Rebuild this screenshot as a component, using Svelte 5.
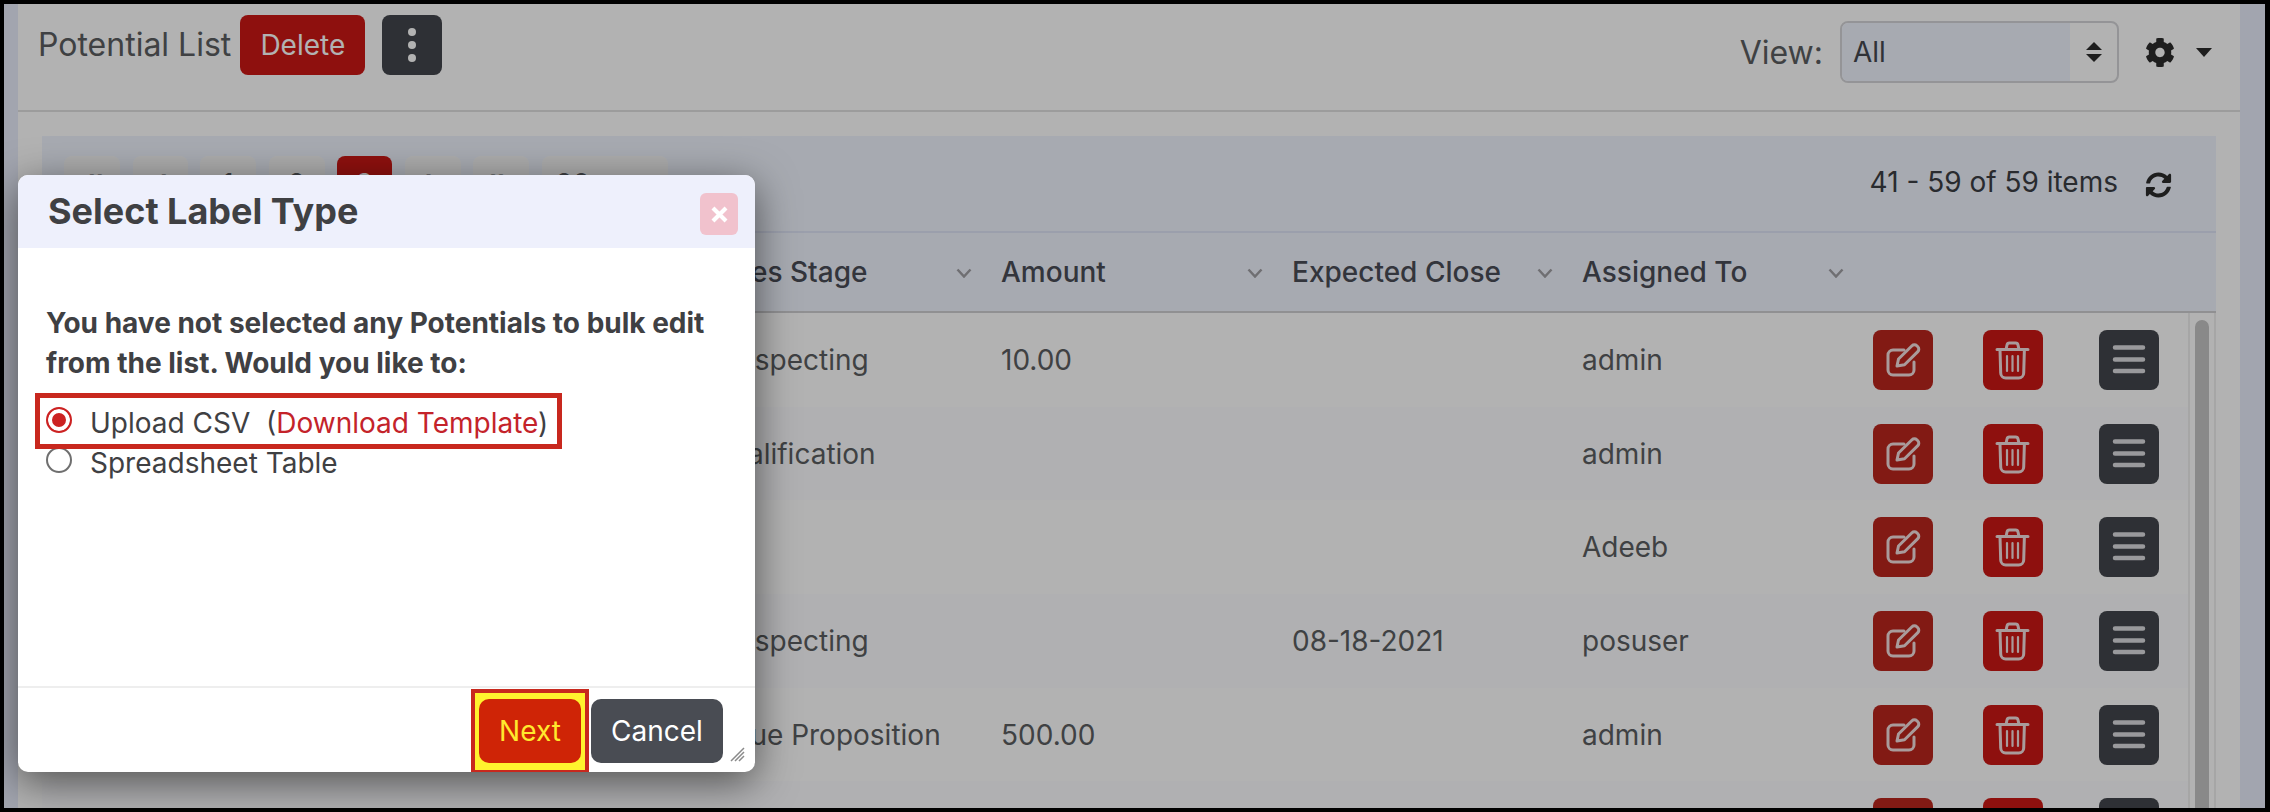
<script lang="ts">
  const pages = [
    { label: '«', w: 56, arrow: true },
    { label: '‹', w: 55, arrow: true },
    { label: '1', w: 56 },
    { label: '2', w: 56 },
    { label: '3', w: 55, active: true },
    { label: '›', w: 56, arrow: true },
    { label: '»', w: 56, arrow: true },
    { label: '20', w: 126, size: true },
  ];
  const cols = ['Sales Stage', 'Amount', 'Expected Close', 'Assigned To'];
  const rows = [
    { stage: 'Prospecting', amount: '10.00', close: '', owner: 'admin' },
    { stage: 'Qualification', amount: '', close: '', owner: 'admin' },
    { stage: '', amount: '', close: '', owner: 'Adeeb' },
    { stage: 'Prospecting', amount: '', close: '08-18-2021', owner: 'posuser' },
    { stage: 'Value Proposition', amount: '500.00', close: '', owner: 'admin' },
    { stage: '', amount: '', close: '', owner: '' },
  ];
</script>

<div class="frame">
  <div class="page">
    <header class="topbar">
      <span class="title">Potential List</span>
      <button class="btn red">Delete</button>
      <button class="btn dark dots" aria-label="More">
        <i></i><i></i><i></i>
      </button>
      <span class="view-label">View:</span>
      <div class="select">
        <span class="select-value">All</span>
        <span class="select-arrows"><b class="up"></b><b class="down"></b></span>
      </div>
      <svg class="gear" viewBox="0 0 512 512"><path d="M487.4 315.7l-42.6-24.6c4.3-23.2 4.3-47 0-70.2l42.6-24.6c4.9-2.8 7.1-8.6 5.5-14-11.1-35.6-30-67.8-54.7-94.6-3.8-4.1-10-5.1-14.8-2.3L380.8 110c-17.9-15.4-38.5-27.3-60.8-35.1V25.8c0-5.6-3.9-10.5-9.4-11.7-36.7-8.2-74.3-7.8-109.2 0-5.5 1.2-9.4 6.1-9.4 11.7V75c-22.2 7.9-42.8 19.8-60.8 35.1L88.7 85.5c-4.9-2.8-11-1.9-14.8 2.3-24.7 26.7-43.6 58.9-54.7 94.6-1.7 5.4.6 11.2 5.5 14L67.3 221c-4.3 23.2-4.3 47 0 70.2l-42.6 24.6c-4.9 2.8-7.1 8.6-5.5 14 11.1 35.6 30 67.8 54.7 94.6 3.8 4.1 10 5.1 14.8 2.3l42.6-24.6c17.9 15.4 38.5 27.3 60.8 35.1v49.2c0 5.6 3.9 10.5 9.4 11.7 36.7 8.2 74.3 7.8 109.2 0 5.5-1.2 9.4-6.1 9.4-11.7v-49.2c22.2-7.9 42.8-19.8 60.8-35.1l42.6 24.6c4.9 2.8 11 1.9 14.8-2.3 24.7-26.7 43.6-58.9 54.7-94.6 1.5-5.5-.7-11.3-5.6-14.1zM256 336c-44.1 0-80-35.9-80-80s35.9-80 80-80 80 35.9 80 80-35.9 80-80 80z"/></svg>
      <b class="caret"></b>
    </header>

    <section class="panel">
      <div class="toolbar">
        <div class="pager">
          {#each pages as p}
            <span class="page-btn" class:active={p.active} class:arrow={p.arrow} class:size={p.size} style="width: {p.w}px">{p.label}</span>
          {/each}
        </div>
        <span class="info">41 - 59 of 59 items</span>
        <svg class="sync" viewBox="0 0 512 512"><path d="M370.72 133.28C339.458 104.008 298.888 87.962 255.848 88c-77.458.068-144.328 53.178-162.791 126.85-1.344 5.363-6.122 9.15-11.651 9.15H24.103c-7.498 0-13.194-6.807-11.807-14.176C33.933 94.924 134.813 8 256 8c66.448 0 126.791 26.136 171.315 68.685L463.03 40.97C478.149 25.851 504 36.559 504 57.941V192c0 13.255-10.745 24-24 24H345.941c-21.382 0-32.09-25.851-16.971-40.971l41.75-41.749zM32 296h134.059c21.382 0 32.09 25.851 16.971 40.971l-41.75 41.75c31.262 29.273 71.835 45.319 114.876 45.28 77.418-.07 144.315-53.144 162.787-126.849 1.344-5.363 6.122-9.15 11.651-9.15h57.304c7.498 0 13.194 6.807 11.807 14.176C478.067 417.076 377.187 504 256 504c-66.448 0-126.791-26.136-171.315-68.685L48.97 471.03C33.851 486.149 8 475.441 8 454.059V320c0-13.255 10.745-24 24-24z"/></svg>
      </div>

      <div class="thead grid">
        <span></span>
        {#each cols as c}
          <span class="th">
            {c}
            <svg class="chev" viewBox="0 0 16 10"><path d="M1.5 1.5 8 8.5l6.5-7" /></svg>
          </span>
        {/each}
      </div>

      <div class="tbody">
        <div class="rows">
          {#each rows as r, i}
            <div class="grid row" class:alt={i % 2 === 1}>
              <span></span>
              <span class="td">{r.stage}</span>
              <span class="td">{r.amount}</span>
              <span class="td">{r.close}</span>
              <span class="td">{r.owner}</span>
              <div class="actions">
                <button class="icon-btn edit" aria-label="Edit">
                  <svg viewBox="0 0 60 60">
                    <path d="M31 20H20a5 5 0 0 0-5 5v15a5 5 0 0 0 5 5h16a5 5 0 0 0 5-5v-8" />
                    <path d="M24 36l1.5-7L39 15.8a3.4 3.4 0 0 1 4.8 0l1 1a3.4 3.4 0 0 1 0 4.8L31.5 34.8z" />
                  </svg>
                </button>
                <button class="icon-btn trash" aria-label="Delete">
                  <svg viewBox="0 0 60 60">
                    <path d="M14 19.500h31M17 19.500l.7 23.500a5 5 0 0 0 5 5h13a5 5 0 0 0 5-5l.7-23.500" />
                    <path d="M23 19.500l1-4.500a2.500 2.500 0 0 1 2.500-2h6a2.500 2.500 0 0 1 2.500 2l1 4.500" />
                    <path class="thin" d="M24 26v15M29.500 26v15M35 26v15" />
                  </svg>
                </button>
                <button class="icon-btn menu" aria-label="Menu">
                  <svg viewBox="0 0 60 60">
                    <path d="M16 17.500h28M16 29.500h28M16 41h28" />
                  </svg>
                </button>
              </div>
            </div>
          {/each}
        </div>
        <div class="scrolltrack"><div class="thumb"></div></div>
      </div>
    </section>
  </div>

  <div class="backdrop"></div>

  <div class="modal" role="dialog" aria-label="Select Label Type">
    <div class="modal-head">
      <span class="modal-title">Select Label Type</span>
      <button class="modal-close" aria-label="Close">
        <svg viewBox="0 0 16 16"><path d="M2.500 2.500l11 11M13.500 2.500l-11 11" /></svg>
      </button>
    </div>
    <div class="modal-body">
      <p class="prompt">You have not selected any Potentials to bulk edit from the list. Would you like to:</p>
      <div class="option-list">
        <div class="highlight"></div>
        <label class="option">
          <span class="radio on"></span>
          <span>Upload CSV&nbsp; (<span class="link">Download Template</span>)</span>
        </label>
        <label class="option">
          <span class="radio"></span>
          <span>Spreadsheet Table</span>
        </label>
      </div>
    </div>
    <div class="modal-foot">
      <span class="next-ring"><button class="next">Next</button></span>
      <button class="cancel">Cancel</button>
      <svg class="grip" viewBox="0 0 16 16"><path d="M15 2 2 15M15 6 6 15M15 10l-5 5" /></svg>
    </div>
  </div>
</div>

<style>
:global(body) {
  margin: 0;
  background: #000;
}

.frame {
  position: relative;
  margin: 4px 5px 4px 4px;
  height: 804px;
  overflow: hidden;
  background: #e9edfb;
  font-family: Inter, "Liberation Sans", sans-serif;
  font-size: 28px;
  color: #5b5d61;
}

.page {
  height: 100%;
  margin: 0 25px 0 14px;
  background: #fff;
  display: flex;
  flex-direction: column;
}

.topbar {
  height: 108px;
  flex-shrink: 0;
  border-bottom: 2px solid #e0e0e0;
  box-sizing: border-box;
  padding: 10px 28px 34px 20px;
  display: flex;
  align-items: center;
}

.title { font-size: 32px; margin-right: 9px; margin-top: -2px; }

.btn {
  height: 60px;
  border: none;
  border-radius: 8px;
  color: #fff;
  font: inherit;
  padding: 0;
}
.red { background: #cc1815; width: 125px; }
.dark { background: #43464c; }

.dots {
  width: 60px;
  margin-left: 17px;
  display: flex;
  flex-direction: column;
  align-items: center;
  justify-content: center;
  gap: 5px;
}
.dots i {
  width: 8px;
  height: 8px;
  border-radius: 50%;
  background: #fff;
}

.view-label { margin-left: auto; margin-right: 17px; margin-top: 14px; font-size: 32px; }

.select {
  width: 279px;
  height: 62px;
  margin-top: 14px;
  box-sizing: border-box;
  border: 2px solid #d5d5d8;
  border-radius: 8px;
  display: flex;
  background: #fff;
  overflow: hidden;
}
.select-value {
  flex: 1;
  background: #f0f4fe;
  padding-left: 11px;
  line-height: 58px;
  color: #454850;
}
.select-arrows {
  width: 47px;
  display: flex;
  flex-direction: column;
  align-items: center;
  justify-content: center;
  gap: 4px;
}
.up, .down, .caret {
  width: 0;
  height: 0;
  border-left: 8px solid transparent;
  border-right: 8px solid transparent;
}
.up { border-bottom: 8px solid #2c2c2c; }
.down { border-top: 8px solid #2c2c2c; }

.gear {
  width: 30px;
  height: 31px;
  margin-left: 26px;
  margin-top: 14px;
  fill: #2b2b2b;
}
.caret {
  margin-left: 21px;
  margin-top: 14px;
  border-top: 9px solid #2b2b2b;
}

.panel {
  flex: 1;
  min-height: 0;
  padding: 24px 24px 0;
  border-top-right-radius: 8px;
  display: flex;
  flex-direction: column;
  color: #5b5d61;
}

.toolbar {
  height: 97px;
  flex-shrink: 0;
  box-sizing: border-box;
  background: #f0f4fe;
  border-bottom: 2px solid #dfe4f6;
  padding: 20px 44px 0 22px;
  display: flex;
  align-items: flex-start;
  gap: 27px;
}

.pager { display: flex; gap: 12.500px; margin-right: auto; }

.page-btn {
  height: 56px;
  box-sizing: border-box;
  border-radius: 8px;
  background: #f7f7f7;
  color: #5a5c60;
  line-height: 56px;
  text-align: center;
}
.page-btn.active { background: #cc1815; color: #fff; }
.page-btn.arrow { font-size: 40px; line-height: 52px; }
.page-btn.size { text-align: left; padding-left: 14px; }

.info { margin-top: 9px; color: #3c3e44; line-height: 34px; }
.sync { width: 27px; height: 26px; margin-top: 16px; fill: #2b2b2b; }

.grid {
  display: grid;
  grid-template-columns: 668px 291px 291px 290px 291px 1fr;
}

.thead {
  height: 80px;
  flex-shrink: 0;
  box-sizing: border-box;
  background: #f0f4fe;
  border-bottom: 2px solid #cfcfd2;
  align-items: center;
}

.th {
  display: flex;
  align-items: center;
  font-weight: 500;
  color: #4a4d56;
  position: relative;
}

.chev {
  position: absolute;
  right: 29px;
  top: 13px;
  width: 16px;
  height: 10px;
  fill: none;
  stroke: #a09fa4;
  stroke-width: 2.500;
}

.tbody {
  flex: 1;
  min-height: 0;
  display: flex;
  overflow: hidden;
}

.rows { flex: 1; min-width: 0; }

.row { height: 93.700px; align-items: center; }
.row.alt { background: #fcfdff; }

.td { white-space: nowrap; }

.actions { display: flex; gap: 50px; }

.icon-btn {
  width: 60px;
  height: 60px;
  border: none;
  border-radius: 8px;
  padding: 0;
  flex-shrink: 0;
}
.icon-btn svg {
  display: block;
  width: 60px;
  height: 60px;
  fill: none;
  stroke: #f3dede;
  stroke-width: 3;
  stroke-linecap: round;
  stroke-linejoin: round;
}
.icon-btn svg .thin { stroke-width: 2.200; }
.edit { background: #ba261e; }
.trash { background: #cc1815; }
.menu { background: #43464c; margin-left: 6px; }
.menu svg { stroke: #dcdce0; stroke-width: 4.500; }

.scrolltrack {
  width: 28px;
  flex-shrink: 0;
  box-sizing: border-box;
  border-left: 2px solid #eeeeee;
  border-right: 2px solid #eeeeee;
  padding: 7px 5px 0;
}
.thumb {
  height: 800px;
  border-radius: 8px;
  background: #c4c4c4;
}

.backdrop {
  position: absolute;
  inset: 0;
  background: rgba(0, 0, 0, 0.3);
}

.modal {
  position: absolute;
  left: 14px;
  top: 171px;
  width: 737px;
  height: 597px;
  background: #fff;
  border-radius: 10px;
  box-shadow: 0 10px 40px rgba(0, 0, 0, 0.55);
  display: flex;
  flex-direction: column;
  overflow: hidden;
  color: #3f4043;
}

.modal-head {
  height: 73px;
  flex-shrink: 0;
  background: #eef0fc;
  display: flex;
  align-items: center;
  justify-content: space-between;
  padding: 0 17px 0 30px;
}
.modal-title {
  font-size: 36px;
  font-weight: 700;
  margin-top: -1px;
}
.modal-close {
  width: 38px;
  height: 42px;
  margin-top: 5px;
  border: none;
  border-radius: 6px;
  background: #f1c2cd;
  padding: 0;
  display: flex;
  align-items: center;
  justify-content: center;
}
.modal-close svg {
  width: 19px;
  height: 19px;
  fill: none;
  stroke: #fff;
  stroke-width: 3.500;
}

.modal-body {
  flex: 1;
  min-height: 0;
  padding: 55px 28px 0;
}

.prompt {
  margin: 0 0 20px;
  font-weight: 700;
  line-height: 40px;
}

.option-list { position: relative; }

.highlight {
  position: absolute;
  left: -11px;
  top: -10px;
  width: 527px;
  height: 56px;
  box-sizing: border-box;
  border: 5px solid #c8281e;
}

.option {
  display: flex;
  align-items: center;
  gap: 18px;
  height: 40px;
}

.radio {
  width: 26px;
  height: 26px;
  box-sizing: border-box;
  border-radius: 50%;
  border: 2px solid #6f6f6f;
  margin-top: -6px;
  flex-shrink: 0;
}
.radio.on {
  border-color: #cc2222;
  background: #cc2222;
  box-shadow: inset 0 0 0 4px #fff;
}

.link { color: #c4232a; }

.modal-foot {
  height: 86px;
  flex-shrink: 0;
  box-sizing: border-box;
  border-top: 2px solid #eeeeee;
  position: relative;
  display: flex;
  justify-content: flex-end;
  align-items: flex-start;
  padding: 1px 32px 0 0;
  gap: 2px;
}

.next-ring {
  display: block;
  box-sizing: border-box;
  width: 118px;
  height: 85px;
  border: 4px solid #c8281e;
  background: #fff22e;
  padding: 6px 4px;
}
.next {
  display: block;
  width: 102px;
  height: 64px;
  border: none;
  border-radius: 10px;
  background: #cf2406;
  color: #ffe92e;
  font: inherit;
  padding: 0;
}
.cancel {
  width: 132px;
  height: 64px;
  margin-top: 10px;
  border: none;
  border-radius: 10px;
  background: #494c53;
  color: #fff;
  font: inherit;
  padding: 0;
}

.grip {
  position: absolute;
  right: 10px;
  bottom: 10px;
  width: 16px;
  height: 16px;
  fill: none;
  stroke: #8a8a8a;
  stroke-width: 1.500;
}
</style>
